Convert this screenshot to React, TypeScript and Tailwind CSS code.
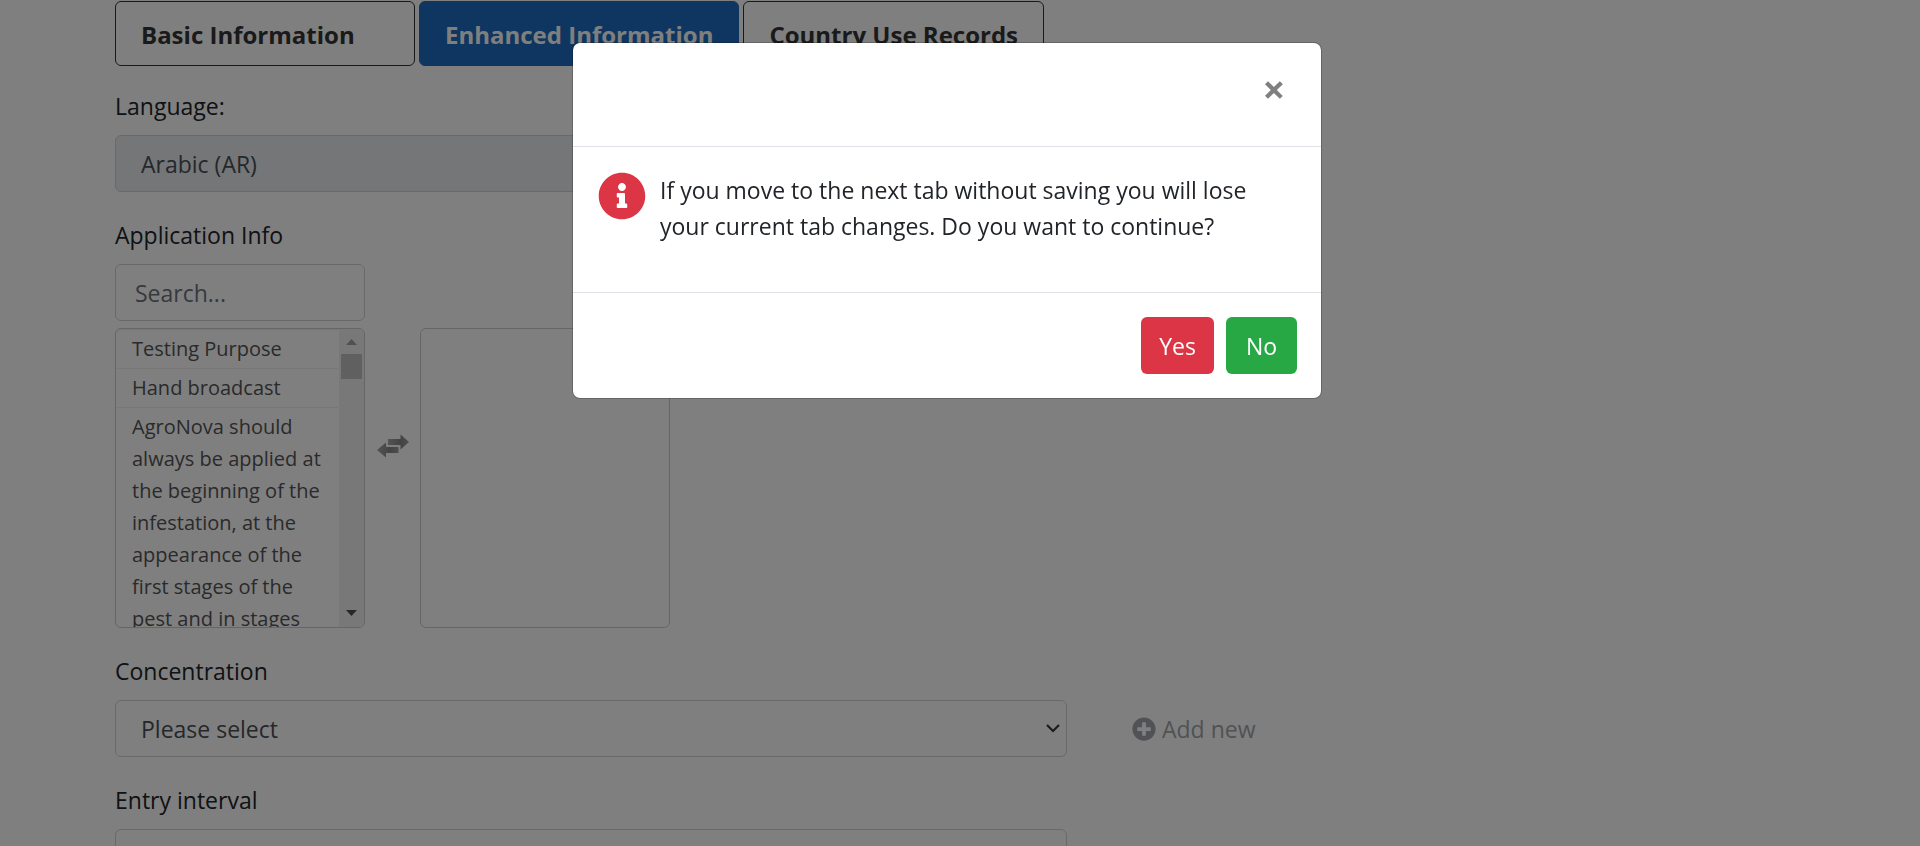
import { useState } from "react";
import type { ReactNode } from "react";
import { FaInfoCircle, FaPlusCircle } from "react-icons/fa";

const tabs = ["Basic Information", "Enhanced Information", "Country Use Records"];

const applicationInfo = [
  "Testing Purpose",
  "Hand broadcast",
  "AgroNova should always be applied at the beginning of the infestation, at the appearance of the first stages of the pest and in stages",
];

function Field({ id, label, children }: { id: string; label: string; children: ReactNode }) {
  return (
    <div className="mb-6 flex flex-col items-start">
      <label htmlFor={id} className="mb-3 pt-[2px] leading-[34px]">
        {label}
      </label>
      {children}
    </div>
  );
}

function SelectBox({ id, option, disabled = false }: { id: string; option: string; disabled?: boolean }) {
  return (
    <div className="relative w-full max-w-[952px]">
      <select
        id={id}
        disabled={disabled}
        className="block h-[57px] w-full appearance-none rounded-md border border-[#ced4da] bg-white px-[25px] pt-[2px] text-[#495057] opacity-100 disabled:bg-[#e9ecef]"
      >
        <option>{option}</option>
      </select>
      <svg
        viewBox="0 0 14 9"
        aria-hidden="true"
        className="pointer-events-none absolute top-6 right-[7px] h-[9px] w-[14px]"
        fill="none"
        stroke="#343a40"
        strokeWidth="2.2"
      >
        <path d="M1 1l6 6 6-6" />
      </svg>
    </div>
  );
}

function SwapArrows() {
  return (
    <svg viewBox="0 0 34 24" aria-hidden="true" className="h-6 w-[34px]">
      <defs>
        <linearGradient id="swap" x1="0" y1="0" x2="1" y2="0">
          <stop offset="0" stopColor="#a8a8a8" />
          <stop offset="0.6" stopColor="#888888" />
          <stop offset="1" stopColor="#9c9c9c" />
        </linearGradient>
      </defs>
      <path d="M12 5h12.500V0.500L33 8l-8.500 7.500V11H12z" fill="url(#swap)" />
      <path d="M22.500 13v6H10v4.500L1 16l9-7.500V13z" fill="url(#swap)" />
    </svg>
  );
}

function TransferLists() {
  return (
    <div className="flex items-stretch">
      <div className="flex h-[300px] w-[250px] overflow-hidden rounded-md border border-[#ccc] shadow-[inset_0_1px_1px_rgba(0,0,0,0.075)]">
        <ul className="flex-1 px-px pt-px text-xl leading-8 text-[#555]">
          {applicationInfo.map((item) => (
            <li key={item} className="border-b border-[#eee] py-[3px] pr-3 pl-[15px]">
              {item}
            </li>
          ))}
        </ul>
        <div aria-hidden="true" className="flex w-[25px] flex-col items-center bg-[#f1f1f1]">
          <svg viewBox="0 0 25 25" className="h-[25px] w-[25px]" fill="#a3a3a3">
            <path d="M7 16h11l-5.500-6z" />
          </svg>
          <div className="h-[25px] w-[21px] bg-[#c1c1c1]" />
          <div className="flex-1" />
          <svg viewBox="0 0 25 25" className="h-[25px] w-[25px]" fill="#505050">
            <path d="M7 8h11l-5.500 6z" />
          </svg>
        </div>
      </div>
      <button type="button" aria-label="Move items" className="flex w-[55px] items-start justify-center pt-[106px]">
        <SwapArrows />
      </button>
      <ul aria-label="Selected items" className="w-[250px] rounded-md border border-[#ccc]" />
    </div>
  );
}

function ConfirmDialog({ onClose }: { onClose: () => void }) {
  return (
    <div className="fixed inset-0 overflow-hidden bg-black/50 pt-[42px] pr-[26px]">
      <div
        role="dialog"
        aria-modal="true"
        aria-describedby="confirm-text"
        className="mx-auto max-w-[750px] rounded-lg border border-black/20 bg-white bg-clip-padding"
      >
        <div className="flex h-[104px] justify-end border-b border-[#dee2e6] px-6 pt-[22px]">
          <button
            type="button"
            aria-label="Close"
            onClick={onClose}
            className="h-12 w-[46px] text-[40px] leading-[48px] font-bold text-[#808080]"
          >
            ×
          </button>
        </div>
        <div className="flex gap-[14px] px-6 pt-[25px] pb-12">
          <FaInfoCircle className="ml-px size-12 shrink-0 text-[#dc3545]" />
          <p id="confirm-text" className="max-w-[610px] leading-9">
            If you move to the next tab without saving you will lose your current tab changes. Do you want to continue?
          </p>
        </div>
        <div className="flex justify-end gap-3 border-t border-[#dee2e6] px-6 py-6">
          <button type="button" onClick={onClose} className="h-[57px] w-[73px] rounded-md bg-[#dc3545] pt-[2px] text-white">
            Yes
          </button>
          <button type="button" onClick={onClose} className="h-[57px] w-[71px] rounded-md bg-[#28a745] pt-[2px] text-white">
            No
          </button>
        </div>
      </div>
    </div>
  );
}

export default function App() {
  const [active, setActive] = useState("Enhanced Information");
  const [open, setOpen] = useState(true);

  return (
    <div className="h-screen overflow-hidden bg-white font-['Open_Sans','Noto_Sans',sans-serif] text-[23px] text-[#212529]">
      <main className="pt-px pl-[115px]">
        <nav className="mb-[21px] flex gap-1 text-2xl">
          {tabs.map((tab) => (
            <button
              key={tab}
              type="button"
              onClick={() => setActive(tab)}
              className={
                tab === active
                  ? "h-[65px] min-w-[300px] rounded-md border border-[#1c6cc0] bg-[#1c6cc0] px-[25px] pt-[2px] text-left font-bold text-white"
                  : "h-[65px] min-w-[300px] rounded-md border border-[#343434] bg-white px-[25px] pt-[2px] text-left font-bold text-[#343434]"
              }
            >
              {tab}
            </button>
          ))}
        </nav>

        <Field id="language" label="Language:">
          <SelectBox id="language" option="Arabic (AR)" disabled />
        </Field>

        <Field id="search" label="Application Info">
          <input
            id="search"
            type="text"
            placeholder="Search..."
            className="mb-[7px] h-[57px] w-[250px] rounded-md border border-[#ced4da] px-[19px] placeholder:text-[#6c757d]"
          />
          <TransferLists />
        </Field>

        <Field id="concentration" label="Concentration">
          <div className="flex w-full items-center gap-[65px]">
            <SelectBox id="concentration" option="Please select" />
            <button type="button" className="flex items-center gap-[6px] whitespace-nowrap text-[#a0a5aa]">
              <FaPlusCircle className="size-6" />
              <span className="pt-[2px]">Add new</span>
            </button>
          </div>
        </Field>

        <Field id="entry" label="Entry interval">
          <SelectBox id="entry" option="Please select" />
        </Field>
      </main>
      {open && <ConfirmDialog onClose={() => setOpen(false)} />}
    </div>
  );
}
